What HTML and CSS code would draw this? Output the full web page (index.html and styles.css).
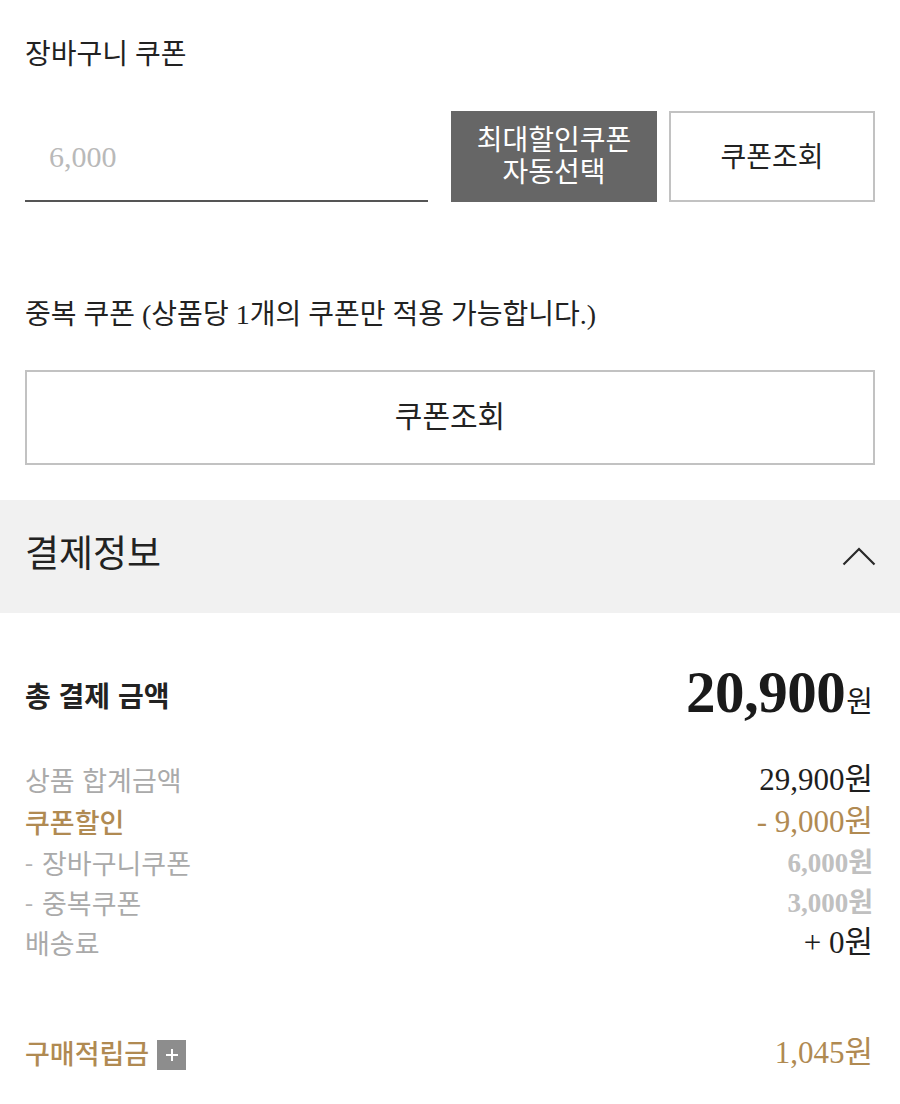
FILE: index.html
```html
<!DOCTYPE html>
<html lang="ko">
<head>
<meta charset="utf-8">
<title>쿠폰 / 결제정보</title>
<link rel="stylesheet" href="styles.css">
</head>
<body>
<section class="coupons">
  <div class="label title">장바구니 쿠폰</div>
  <div class="coupon-row">
    <div class="coupon-input"><span class="placeholder">6,000</span></div>
    <button class="btn btn-dark"><span class="line">최대할인쿠폰</span><span class="line">자동선택</span></button>
    <button class="btn btn-outline">쿠폰조회</button>
  </div>
  <div class="label dup">중복 쿠폰 (상품당 1개의 쿠폰만 적용 가능합니다.)</div>
  <button class="btn btn-outline btn-wide">쿠폰조회</button>
</section>

<section class="pay-header">
  <h2 class="pay-title">결제정보</h2>
  <svg class="chevron" width="34" height="19" viewBox="0 0 34 19" aria-hidden="true">
    <polyline points="1.5,17.5 17,2 32.5,17.5" fill="none" stroke="#2a2a2a" stroke-width="2.2"/>
  </svg>
</section>

<section class="pay-body">
  <div class="total-row">
    <div class="total-label">총 결제 금액</div>
    <div class="total-amount">20,900<span class="won">원</span></div>
  </div>

  <div class="rows">
    <div class="row r1">
      <span class="k grey">상품 합계금액</span>
      <span class="v dark">29,900원</span>
    </div>
    <div class="row r2">
      <span class="k gold strong">쿠폰할인</span>
      <span class="v gold">- 9,000원</span>
    </div>
    <div class="row">
      <span class="k grey"><span class="dash">-</span> 장바구니쿠폰</span>
      <span class="v sub">6,000원</span>
    </div>
    <div class="row">
      <span class="k grey"><span class="dash">-</span> 중복쿠폰</span>
      <span class="v sub">3,000원</span>
    </div>
    <div class="row">
      <span class="k grey">배송료</span>
      <span class="v dark">+ 0원</span>
    </div>
  </div>

  <div class="row points">
    <span class="k gold strong">구매적립금 <span class="plus-box"><span class="plus"></span></span></span>
    <span class="v gold">1,045원</span>
  </div>
</section>
</body>
</html>
```

FILE: styles.css
```css
* { box-sizing: border-box; }

html, body {
  margin: 0;
  padding: 0;
  background: #fff;
}

body {
  width: 900px;
  font-family: "Liberation Serif", "Noto Sans CJK KR", serif;
  color: #222;
}

.coupons {
  padding: 35px 25px 0;
}

.label {
  font-size: 28px;
  line-height: 40px;
  color: #222;
}

.coupon-row {
  display: flex;
  margin-top: 36px;
  height: 91px;
}

.coupon-input {
  width: 403px;
  border-bottom: 2px solid #555;
  display: flex;
  align-items: center;
  padding-left: 24px;
  padding-top: 2px;
  margin-right: 23px;
}

.placeholder {
  font-size: 30px;
  color: #b9b9b9;
}

.btn {
  font-family: "Noto Sans CJK KR", "Liberation Sans", sans-serif;
  font-size: 28px;
  padding: 0;
  margin: 0;
  cursor: pointer;
}

.btn-dark {
  width: 206px;
  background: #666;
  color: #fff;
  border: none;
  margin-right: 12px;
  padding-bottom: 6px;
  display: flex;
  flex-direction: column;
  align-items: center;
  justify-content: center;
}

.btn-dark .line {
  display: block;
  line-height: 32px;
  height: 32px;
}

.btn-outline {
  width: 206px;
  background: #fff;
  color: #222;
  border: 2px solid #c2c2c2;
  line-height: 34px;
  padding-bottom: 4px;
}

.dup {
  margin-top: 93px;
}

.btn-wide {
  display: block;
  width: 850px;
  height: 95px;
  margin-top: 35px;
  font-size: 30px;
  padding-bottom: 8px;
}

.pay-header {
  margin-top: 35px;
  height: 113px;
  background: #f1f1f1;
  padding: 0 25px;
  display: flex;
  align-items: center;
  justify-content: space-between;
}

.pay-title {
  margin: 0 0 12px;
  font-family: "Noto Sans CJK KR", sans-serif;
  font-weight: 400;
  font-size: 37px;
  line-height: 46px;
  color: #222;
}

.chevron {
  display: block;
  margin-right: -1px;
}

.pay-body {
  padding: 52px 25px 40px;
}

.total-row {
  display: flex;
  justify-content: space-between;
  align-items: center;
  height: 60px;
}

.total-label {
  font-family: "Noto Sans CJK KR", sans-serif;
  font-weight: 700;
  font-size: 28px;
  line-height: 36px;
  color: #222;
}

.total-amount {
  font-weight: 700;
  font-size: 59px;
  line-height: 60px;
  color: #1a1a1a;
  letter-spacing: -0.5px;
  margin-right: 2px;
}

.won {
  font-family: "Noto Sans CJK KR", sans-serif;
  font-weight: 400;
  font-size: 29px;
  letter-spacing: 0;
  margin-left: 1px;
}

.rows {
  margin-top: 34px;
}

.row {
  display: flex;
  justify-content: space-between;
  align-items: center;
  height: 40px;
}

.row.r1,
.row.r2 {
  height: 42px;
}

.k {
  font-family: "Noto Sans CJK KR", sans-serif;
  font-size: 27px;
  line-height: 40px;
  display: flex;
  align-items: center;
}

.v {
  font-size: 31px;
  line-height: 40px;
  margin-right: 2px;
}

.grey { color: #aaa; }
.dark { color: #1e1e1e; }
.gold { color: #b08a52; }
.strong { font-weight: 500; }

.dash {
  font-family: "Liberation Serif", serif;
  font-size: 24px;
  margin-right: 9px;
  color: #b3b3b3;
}

.sub {
  font-size: 27px;
  font-weight: 700;
  color: #c0c0c0;
}

.points {
  margin-top: 70px;
}

.plus-box {
  position: relative;
  display: inline-block;
  width: 29px;
  height: 30px;
  background: #8d8d8d;
  margin-left: 8px;
  margin-top: 4px;
}

.plus::before,
.plus::after {
  content: "";
  position: absolute;
  background: #fff;
  left: 50%;
  top: 50%;
  transform: translate(-50%, -50%);
}

.plus::before {
  width: 12px;
  height: 2px;
}

.plus::after {
  width: 2px;
  height: 12px;
}
```
